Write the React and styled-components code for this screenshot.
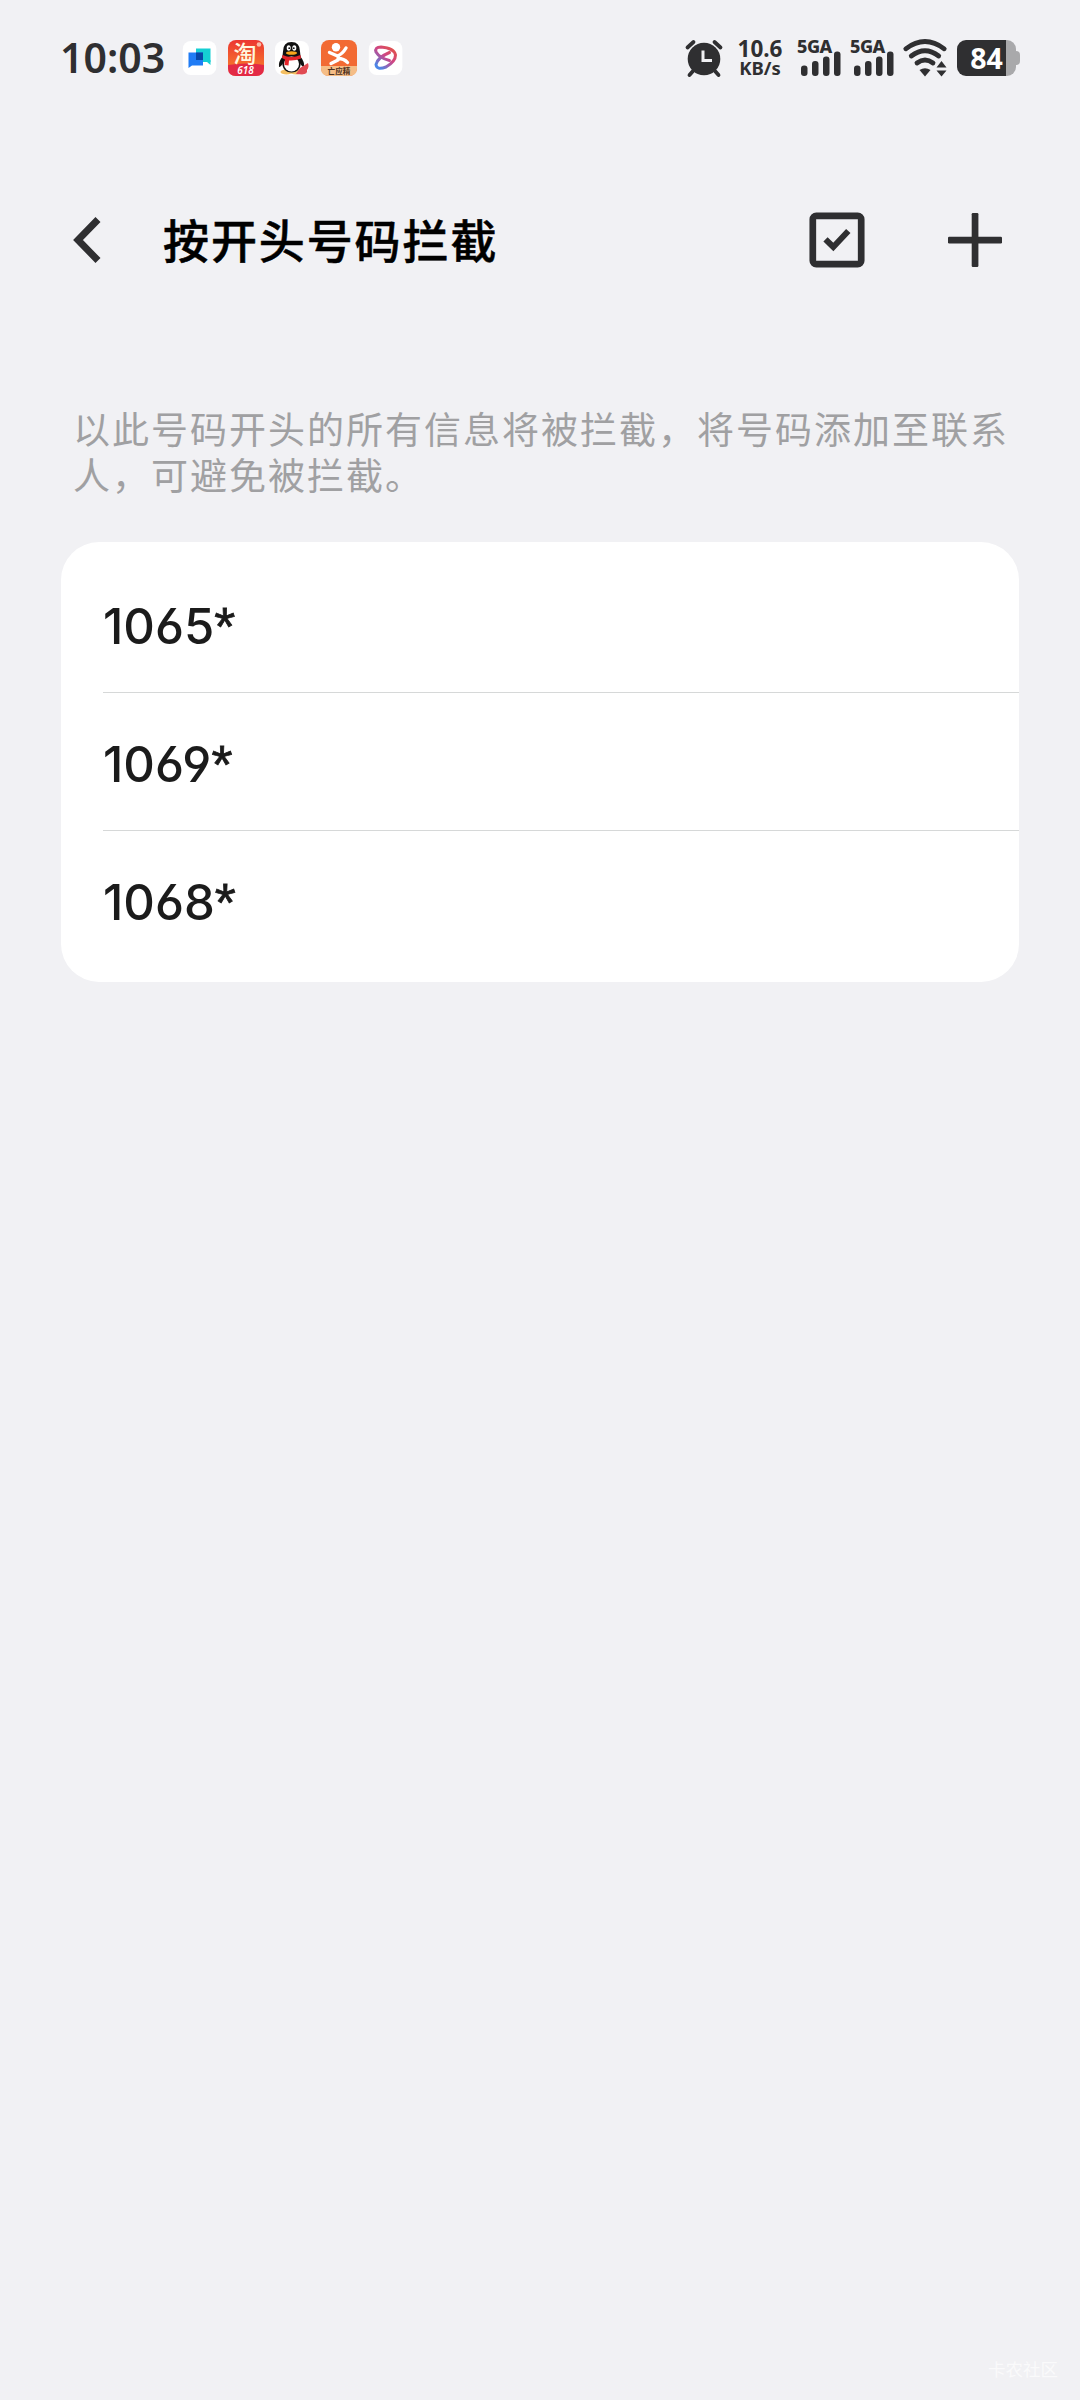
import React from 'react';
import styled, { createGlobalStyle } from 'styled-components';

const GlobalStyle = createGlobalStyle`
  * {
    box-sizing: border-box;
  }
  body {
    margin: 0;
    background-color: #f1f1f4;
    font-family: 'Noto Sans', 'Noto Sans CJK SC', sans-serif;
  }
  ul {
    margin: 0;
    padding: 0;
    list-style: none;
  }
  svg {
    display: block;
    flex: none;
    overflow: visible;
  }
`;

const Page = styled.div`
  display: flex;
  flex-direction: column;
  width: 1080px;
  height: 2400px;
  overflow: hidden;
  background-color: #f1f1f4;
`;

const StatusBar = styled.div`
  display: flex;
  align-items: center;
  justify-content: space-between;
  height: 116px;
  padding: 0 60px 0 60px;
  color: #2f2f31;
`;

const StatusSide = styled.div`
  display: flex;
  align-items: center;
`;

const Clock = styled.div`
  width: 122px;
  padding-bottom: 2px;
  font-size: 41px;
  font-weight: 600;
  line-height: 58px;
  white-space: nowrap;
`;

const AppIcons = styled.div`
  display: flex;
  gap: 10.7px;
`;

const NetSpeed = styled.div`
  width: 46px;
  margin: 0 14px 0 14px;
  text-align: center;
  font-weight: 700;
  white-space: nowrap;
  .value {
    font-size: 22.5px;
    line-height: 20px;
  }
  .unit {
    font-size: 18.5px;
    line-height: 18px;
  }
`;

const Signal = styled.div`
  width: 43px;
  margin-right: 10px;
  height: 36px;
  font-size: 18px;
  font-weight: 800;
  line-height: 13px;
  letter-spacing: -0.5px;
  svg {
    margin: -2px 0 0 4px;
  }
`;

const Battery = styled.div`
  display: flex;
  align-items: center;
  margin-left: 9px;
  .body {
    width: 59px;
    height: 36px;
    border-radius: 9px;
    background: linear-gradient(to right, #2f2f31 49px, #a9a9ab 49px);
    color: #fff;
    font-size: 28.5px;
    font-weight: 700;
    line-height: 36px;
    text-align: center;
  }
  .cap {
    width: 4px;
    height: 14px;
    border-radius: 0 4px 4px 0;
    background-color: #a9a9ab;
  }
`;

const Header = styled.header`
  display: flex;
  align-items: center;
  height: 248px;
  padding: 0 75px 0 70px;
`;

const Title = styled.h1`
  flex: 1;
  margin: 0 0 0 58px;
  padding-bottom: 5px;
  color: #000;
  font-family: 'Noto Sans CJK SC', sans-serif;
  font-size: 46px;
  font-weight: 500;
  line-height: 60px;
  letter-spacing: 1.9px;
  -webkit-text-stroke: 0.5px #000;
`;

const Actions = styled.div`
  display: flex;
  gap: 80px;
`;

const Description = styled.p`
  margin: 41px 59px 0 73px;
  height: 137px;
  color: #a0a0a2;
  font-family: 'Noto Sans CJK SC', sans-serif;
  font-size: 37px;
  font-weight: 400;
  line-height: 46px;
  letter-spacing: 2px;
  white-space: pre-line;
`;

const Card = styled.ul`
  width: 958px;
  margin-left: 61px;
  padding: 13px 0 13px 42px;
  border-radius: 38px;
  background-color: #fff;
`;

const NumberItem = styled.li`
  height: 138px;
  padding-top: 5px;
  border-bottom: 1px solid ${(props) => (props.$last ? 'transparent' : '#d6d8d8')};
  color: #1b1b1b;
  font-family: Inter, sans-serif;
  font-feature-settings: 'cv03', 'cv04';
  font-size: 49px;
  font-weight: 500;
  line-height: 134px;
`;

const Star = styled.span`
  font-family: 'Liberation Sans', sans-serif;
  font-size: 54px;
  font-weight: 400;
  line-height: 0;
  vertical-align: -1px;
  -webkit-text-stroke: 0.8px #1b1b1b;
`;

const Watermark = styled.div`
  margin: auto 22px 20px auto;
  color: #fafafb;
  font-size: 17.5px;
  line-height: 22px;
`;

const ChatIcon = () => (
  <svg width="35" height="36" viewBox="0 0 35 36">
    <rect x="0.8" y="1" width="33.6" height="34" rx="8" fill="#fff" />
    <path d="M14 8.5h14.5V22H14z" fill="#15cfd3" />
    <path d="M28.5 20v5l-4-3.5z" fill="#15cfd3" />
    <path d="M6.5 12.5H21v13H10L6.5 28z" fill="#207cf5" />
    <path d="M14 12.5h7V20h-7z" fill="#0747a6" />
  </svg>
);

const TaobaoIcon = () => (
  <svg width="36" height="36" viewBox="0 0 36 36">
    <defs>
      <linearGradient id="tb" x1="0" y1="0" x2="0" y2="1">
        <stop offset="0" stopColor="#ec3630" />
        <stop offset="0.6" stopColor="#f4672d" />
        <stop offset="1" stopColor="#f08a2c" />
      </linearGradient>
    </defs>
    <rect width="36" height="36" rx="8" fill="url(#tb)" />
    <path d="M0 25q18-3 36 0v3q0 8-8 8H8q-8 0-8-8z" fill="#e32a45" />
    <text x="17" y="21.5" fontSize="23" fontWeight="500" textAnchor="middle" fill="#fff7df">
      淘
    </text>
    <text x="17.5" y="34" fontSize="10" fontWeight="600" fontStyle="italic" textAnchor="middle" fill="#fff">
      618
    </text>
    <circle cx="31" cy="4.5" r="2.3" fill="#f9b9a5" />
  </svg>
);

const PenguinIcon = () => (
  <svg width="36" height="36" viewBox="0 0 36 36">
    <rect x="1" y="1" width="34" height="34" rx="8" fill="#fff" />
    <ellipse cx="12.5" cy="32" rx="6" ry="2.6" fill="#f4bf62" />
    <ellipse cx="22" cy="32" rx="6" ry="2.6" fill="#f4bf62" />
    <path d="M9 16q-5 6-4 11 2 0 4-4zM26 16q5 6 4 11-2 0-4-4z" fill="#111" />
    <path d="M17.5 2Q9 2 9 11.5l-1 9q0 12 9.5 12t9.5-12l-1-9Q26 2 17.5 2z" fill="#111" />
    <ellipse cx="17.5" cy="24" rx="7.5" ry="7.5" fill="#fff" />
    <ellipse cx="14.7" cy="8" rx="2" ry="2.8" fill="#fff" />
    <ellipse cx="20.3" cy="8" rx="2" ry="2.8" fill="#fff" />
    <circle cx="15.2" cy="8.2" r="0.9" fill="#111" />
    <circle cx="19.8" cy="8.2" r="0.9" fill="#111" />
    <ellipse cx="17.5" cy="13" rx="5.5" ry="1.8" fill="#f8a51b" />
    <path d="M8.5 15q9 4 18 0l.5 3.5q-6 2.5-12 2l-.5 5-4-.5.5-5.5-3-1.5z" fill="#e5252b" />
    <path d="M22 34l4-6 8-5q1.5 4-1 7 1 4-5 4.5z" fill="#e04a52" />
  </svg>
);

const RunnerIcon = () => (
  <svg width="36" height="36" viewBox="0 0 36 36">
    <rect width="36" height="36" rx="8" fill="#f26a33" />
    <path d="M0 26h36v2q0 8-8 8H8q-8 0-8-8z" fill="#f5bd86" />
    <circle cx="15" cy="7.2" r="4.2" fill="#fff" />
    <path
      d="M8.5 12.5l8 3.500q5-2 8.500-8M17.500 15.500l-.5 4.500-7 3.500M17 18.500q6 0 9.500 4"
      fill="none"
      stroke="#fff"
      strokeWidth="3.4"
      strokeLinecap="round"
      strokeLinejoin="round"
    />
    <text x="18" y="33.8" fontSize="7.6" fontWeight="700" textAnchor="middle" fill="#4b3020">
      亡应精
    </text>
  </svg>
);

const LoopIcon = () => (
  <svg width="35" height="36" viewBox="0 0 35 36">
    <defs>
      <linearGradient id="loop" x1="1" y1="0" x2="0.2" y2="1">
        <stop offset="0" stopColor="#e5553f" />
        <stop offset="0.5" stopColor="#cf4585" />
        <stop offset="1" stopColor="#4a86e8" />
      </linearGradient>
    </defs>
    <rect x="0.8" y="1" width="33.6" height="34" rx="8" fill="#fff" />
    <path
      d="M21.5 20.5Q11.5 18 8 12 6.5 7 13 7 26 8 27.5 15 27.5 21.5 18 27 8.5 30.5 8 24.5 9.5 17.5 21.5 12.5"
      fill="none"
      stroke="url(#loop)"
      strokeWidth="3"
      strokeLinecap="round"
      strokeLinejoin="round"
    />
  </svg>
);

const AlarmIcon = () => (
  <svg width="38" height="38" viewBox="0 0 38 38">
    <path
      d="M2.5 8.5l6-5.5M35.5 8.5l-6-5.5M8 32l-3.5 4M30 32l3.5 4"
      stroke="#2f2f31"
      strokeWidth="3.8"
      strokeLinecap="round"
    />
    <circle cx="19" cy="20" r="16.3" fill="#2f2f31" />
    <path d="M18 11.5v10h9" fill="none" stroke="#f1f1f4" strokeWidth="3" />
  </svg>
);

const SignalBars = () => (
  <svg width="40" height="25" viewBox="0 0 40 25" fill="#2f2f31">
    <rect x="0" y="14.5" width="6.5" height="10.5" rx="3" />
    <rect x="11" y="10" width="6.5" height="15" rx="3" />
    <rect x="22" y="5.5" width="6.5" height="19.5" rx="3" />
    <rect x="33" y="0.5" width="6.5" height="24.5" rx="3" />
  </svg>
);

const WifiIcon = () => (
  <svg width="45" height="38" viewBox="0 0 45 38">
    <g fill="none" stroke="#2f2f31" strokeWidth="4.8" strokeLinecap="round">
      <path d="M2.8 9.8q19.2-14.5 38.4 0" />
      <path d="M8.3 17q13.7-10.5 27.4 0" />
      <path d="M14 24q8-6 16 0" />
    </g>
    <path d="M16.5 31q5.5-3.5 11 0L22 37.5z" fill="#2f2f31" />
    <path d="M33.5 28.5l5-6.5 5 6.5zM33.5 31.5h10l-5 6z" fill="#2f2f31" />
  </svg>
);

const BackIcon = () => (
  <svg width="35" height="52" viewBox="0 0 35 52">
    <path d="M28 5.5L8 26l20 20.5" fill="none" stroke="#2f2f31" strokeWidth="7" />
  </svg>
);

const SelectIcon = () => (
  <svg width="56" height="56" viewBox="0 0 56 56" fill="none" stroke="#2f2f31">
    <rect x="3.8" y="3.8" width="48.4" height="48.4" rx="3.5" strokeWidth="6.7" />
    <path d="M16.5 27.3l7.8 7.7 15-16" strokeWidth="6" />
  </svg>
);

const AddIcon = () => (
  <svg width="60" height="56" viewBox="0 0 60 56" fill="#2f2f31">
    <rect x="3" y="24.7" width="54" height="6.7" rx="1.2" />
    <rect x="26.7" y="1" width="6.7" height="54" rx="1.2" />
  </svg>
);

const numbers = ['1065', '1069', '1068'];

const App = () => {
  return (
    <>
      <GlobalStyle />
      <Page>
        <StatusBar>
          <StatusSide>
            <Clock>10:03</Clock>
            <AppIcons>
              <ChatIcon />
              <TaobaoIcon />
              <PenguinIcon />
              <RunnerIcon />
              <LoopIcon />
            </AppIcons>
          </StatusSide>
          <StatusSide>
            <AlarmIcon />
            <NetSpeed>
              <div className="value">10.6</div>
              <div className="unit">KB/s</div>
            </NetSpeed>
            <Signal>
              5GA
              <SignalBars />
            </Signal>
            <Signal>
              5GA
              <SignalBars />
            </Signal>
            <WifiIcon />
            <Battery>
              <div className="body">84</div>
              <div className="cap"></div>
            </Battery>
          </StatusSide>
        </StatusBar>
        <Header>
          <BackIcon />
          <Title>按开头号码拦截</Title>
          <Actions>
            <SelectIcon />
            <AddIcon />
          </Actions>
        </Header>
        <Description>
          {'以此号码开头的所有信息将被拦截，将号码添加至联系\n人，可避免被拦截。'}
        </Description>
        <Card>
          {numbers.map((number, index) => (
            <NumberItem key={number} $last={index === numbers.length - 1}>
              {number}
              <Star>*</Star>
            </NumberItem>
          ))}
        </Card>
        <Watermark>卡农社区</Watermark>
      </Page>
    </>
  );
};

export default App;
